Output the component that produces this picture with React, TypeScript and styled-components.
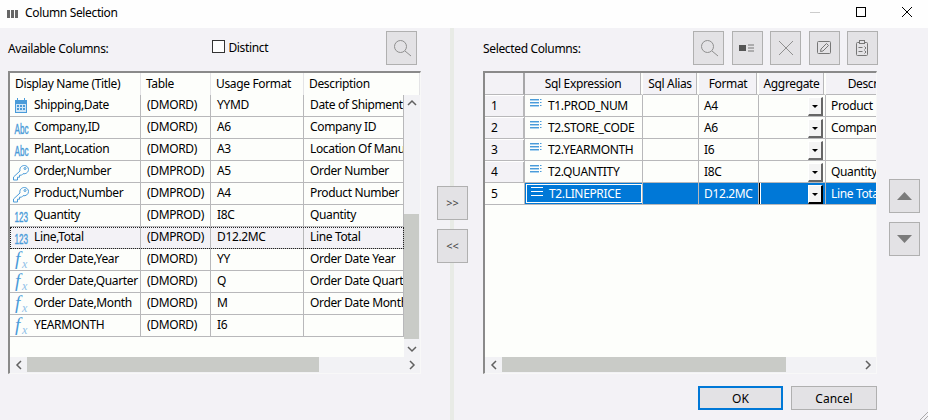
import styled, { createGlobalStyle } from 'styled-components'

type IconKind = 'date' | 'abc' | 'key' | 'num' | 'fx'

interface AvailableColumn {
  name: string
  table: string
  format: string
  description: string
  icon: IconKind
}

interface SelectedColumn {
  sql: string
  format: string
  description: string
}

const AVAILABLE: AvailableColumn[] = [
  { name: 'Shipping,Date', table: '(DMORD)', format: 'YYMD', description: 'Date of Shipment', icon: 'date' },
  { name: 'Company,ID', table: '(DMORD)', format: 'A6', description: 'Company ID', icon: 'abc' },
  { name: 'Plant,Location', table: '(DMORD)', format: 'A3', description: 'Location Of Manufacture', icon: 'abc' },
  { name: 'Order,Number', table: '(DMPROD)', format: 'A5', description: 'Order Number', icon: 'key' },
  { name: 'Product,Number', table: '(DMPROD)', format: 'A4', description: 'Product Number', icon: 'key' },
  { name: 'Quantity', table: '(DMPROD)', format: 'I8C', description: 'Quantity', icon: 'num' },
  { name: 'Line,Total', table: '(DMPROD)', format: 'D12.2MC', description: 'Line Total', icon: 'num' },
  { name: 'Order Date,Year', table: '(DMORD)', format: 'YY', description: 'Order Date Year', icon: 'fx' },
  { name: 'Order Date,Quarter', table: '(DMORD)', format: 'Q', description: 'Order Date Quarter', icon: 'fx' },
  { name: 'Order Date,Month', table: '(DMORD)', format: 'M', description: 'Order Date Month', icon: 'fx' },
  { name: 'YEARMONTH', table: '(DMORD)', format: 'I6', description: '', icon: 'fx' },
]

const SELECTED: SelectedColumn[] = [
  { sql: 'T1.PROD_NUM', format: 'A4', description: 'Product Number' },
  { sql: 'T2.STORE_CODE', format: 'A6', description: 'Company ID' },
  { sql: 'T2.YEARMONTH', format: 'I6', description: '' },
  { sql: 'T2.QUANTITY', format: 'I8C', description: 'Quantity' },
  { sql: 'T2.LINEPRICE', format: 'D12.2MC', description: 'Line Total' },
]

const FOCUSED_AVAILABLE = 6
const ACTIVE_SELECTED = 4
const LEFT_COLS = [131, 70, 93, 100]
const RIGHT_COLS = [40, 118, 56, 60, 67, 106]
const BLUE = '#4a9bd9'

const GlobalStyle = createGlobalStyle`
  html, body {
    margin: 0;
    padding: 0;
    background: #f3f2f6;
  }
  * {
    box-sizing: border-box;
  }
`

const Dialog = styled.div`
  width: 928px;
  height: 420px;
  overflow: hidden;
  position: relative;
  display: flex;
  flex-direction: column;
  background: #f3f2f6;
  color: #000;
  font-family: 'Noto Sans', 'Open Sans', sans-serif;
  font-size: 12px;
  letter-spacing: -0.35px;
`

const TitleBar = styled.div`
  flex: 0 0 28px;
  display: flex;
  align-items: center;
  background: #fefefe;
  padding-left: 7px;
  gap: 7px;
`

const TitleText = styled.span`
  flex: 1;
  line-height: 26px;
  margin-bottom: 2px;
`

const WindowControls = styled.div`
  display: flex;
  align-self: flex-start;
  margin-right: -2px;
`

const WindowControl = styled.div`
  width: 46px;
  height: 24px;
  display: flex;
  align-items: center;
  justify-content: center;
`

const Body = styled.div`
  flex: 1;
  min-height: 0;
  display: flex;
  padding-left: 8px;
`

const Panel = styled.div<{ $width: number }>`
  flex: 0 0 ${(p) => p.$width}px;
  min-width: 0;
  display: flex;
  flex-direction: column;
`

const PanelHeader = styled.div<{ $toolInset: number }>`
  flex: 0 0 43px;
  display: flex;
  align-items: flex-start;
  padding: 3px ${(p) => p.$toolInset}px 0 0;
`

const PanelLabel = styled.span`
  line-height: 35px;
`

const Distinct = styled.label`
  display: flex;
  align-items: center;
  gap: 3px;
  height: 32px;
  margin-left: 104px;
  margin-right: auto;
`

const CheckBox = styled.span`
  width: 13px;
  height: 13px;
  margin-top: -2px;
  background: #fefefe;
  border: 1px solid #333;
`

const ToolButton = styled.button`
  width: 31px;
  height: 34px;
  padding: 0;
  display: flex;
  align-items: center;
  justify-content: center;
  background: #e3e2e5;
  border: 1px solid #b0b0b0;
`

const ToolGroup = styled.div`
  display: flex;
  margin-left: auto;
  margin-right: -1px;
  width: 185px;
  justify-content: space-between;
`

const Frame = styled.div`
  flex: 0 0 303px;
  display: flex;
  flex-direction: column;
  background: #fdfefb;
  border-style: solid;
  border-color: #8a8a8a #f8f8f8 #f8f8f8 #8a8a8a;
  border-width: 2px 1px 1px 2px;
  overflow: hidden;
`

const LeftHeader = styled.div`
  flex: 0 0 22px;
  display: flex;
  background: #fdfefb;
`

const LeftHeaderCell = styled.div<{ $width: number }>`
  flex: 0 0 ${(p) => p.$width}px;
  padding-left: 5px;
  line-height: 21px;
  white-space: nowrap;
  border-right: 1px solid #e4e4e6;
`

const Middle = styled.div`
  flex: 1;
  min-height: 0;
  display: flex;
`

const RowsArea = styled.div`
  flex: 1;
  min-width: 0;
  overflow: hidden;
`

const LeftRow = styled.div<{ $focused: boolean }>`
  height: 22px;
  display: flex;
  position: relative;
  border-bottom: 1px solid #b8b8ba;
  background: ${(p) => (p.$focused ? '#f3f2f6' : 'transparent')};
  outline: ${(p) => (p.$focused ? '1px dotted #222' : 'none')};
  outline-offset: -1px;
`

const Cell = styled.div<{ $width: number; $inset?: number; $active?: boolean }>`
  flex: 0 0 ${(p) => p.$width}px;
  height: 21px;
  padding-left: ${(p) => p.$inset ?? 6}px;
  line-height: 19px;
  white-space: nowrap;
  overflow: hidden;
  border-right: 1px solid #b8b8ba;
  display: flex;
  color: ${(p) => (p.$active ? '#fff' : '#000')};
`

const NameIcon = styled.span`
  flex: 0 0 20px;
  margin-left: -2px;
  margin-right: 2px;
  display: flex;
  align-items: flex-start;
`

const VBar = styled.div`
  flex: 0 0 16px;
  display: flex;
  flex-direction: column;
  align-items: stretch;
  background: #f2f2f5;
`

const HBar = styled.div`
  flex: 0 0 16px;
  display: flex;
  background: #f2f2f5;
`

const BarArrow = styled.div`
  flex: 0 0 17px;
  display: flex;
  align-items: center;
  justify-content: center;
`

const BarTrack = styled.div`
  flex: 1;
  min-width: 0;
  min-height: 0;
`

const VThumb = styled.div<{ $top: number; $size: number }>`
  height: ${(p) => p.$size}px;
  margin: ${(p) => p.$top}px 1px 0 0;
  background: #c9cbc7;
`

const HThumb = styled.div<{ $size: number }>`
  width: ${(p) => p.$size}px;
  height: 15px;
  background: #c9cbc7;
`

const Splitter = styled.div`
  flex: 0 0 31px;
  margin: 0 15px 0 16px;
  display: flex;
  flex-direction: column;
  align-items: center;
`

const SplitterTrack = styled.div<{ $size?: number }>`
  flex: ${(p) => (p.$size ? `0 0 ${p.$size}px` : '1')};
  width: 4px;
  margin-right: 1px;
  background: #e8ebe6;
`

const MoveButton = styled(ToolButton)`
  flex: 0 0 34px;
  font: inherit;
  font-size: 11px;
  color: #444;
`

const SideColumn = styled.div`
  flex: 0 0 31px;
  margin-left: 12px;
  padding-top: 151px;
  display: flex;
  flex-direction: column;
  gap: 9px;
`

const RightHeaderRow = styled.div`
  flex: 0 0 22px;
  display: flex;
  background: #f3f2f6;
`

const RightHeaderCell = styled.div<{ $width: number; $corner: boolean }>`
  flex: 0 0 ${(p) => p.$width}px;
  text-align: center;
  line-height: 21px;
  white-space: nowrap;
  border-right: 2px solid ${(p) => (p.$corner ? '#a6a6a8' : '#fdfefb')};
  border-bottom: 1px solid #b8b8ba;
  box-shadow: ${(p) => (p.$corner ? 'none' : 'inset -1px 0 0 #b8b8ba')};
`

const RightRow = styled.div<{ $active: boolean }>`
  height: 22px;
  display: flex;
  border-bottom: 1px solid #b8b8ba;
  background: ${(p) => (p.$active ? '#0078d7' : 'transparent')};
`

const RowHead = styled.div<{ $active: boolean }>`
  flex: 0 0 ${RIGHT_COLS[0]}px;
  height: 21px;
  padding-left: 6px;
  line-height: 22px;
  background: ${(p) => (p.$active ? '#fdfefb' : '#f3f2f6')};
  border-right: 1px solid #b8b8ba;
  box-shadow: ${(p) => (p.$active ? 'none' : 'inset 0 1px 0 #fff, inset -1px 0 0 #b8b8ba')};
`

const SqlCell = styled(Cell)`
  align-items: flex-start;
  line-height: 21px;
  padding-left: 5px;
  ${(p) => (p.$active ? 'outline: 1px solid #fdfefb; outline-offset: -2px; padding-left: 6px;' : '')}
`

const ListIconSlot = styled.span`
  flex: 0 0 18px;
  padding-top: 4px;
  display: flex;
`

const PlainCell = styled(Cell)`
  line-height: 21px;
  padding-left: 5px;
`

const AggregateCell = styled.div<{ $width: number; $active: boolean }>`
  flex: 0 0 ${(p) => p.$width}px;
  height: 21px;
  display: flex;
  justify-content: flex-end;
  align-items: flex-end;
  padding: 1px 2px 0 0;
  border-right: 1px solid #b8b8ba;
  border-left: ${(p) => (p.$active ? '1px solid #000' : '0')};
  box-shadow: ${(p) => (p.$active ? 'inset 1px 0 0 #fff' : 'none')};
`

const DropButton = styled.div<{ $active: boolean }>`
  width: 15px;
  height: 19px;
  display: flex;
  align-items: center;
  justify-content: center;
  background: #f4f4f4;
  border-style: solid;
  border-color: ${(p) => (p.$active ? '#fff #000 #000 #fff' : '#fff #666 #666 #fff')};
  border-width: 1px 2px 2px 1px;
`

const DropArrow = styled.span`
  width: 0;
  height: 0;
  border-left: 3px solid transparent;
  border-right: 3px solid transparent;
  border-top: 3px solid #000;
`

const Footer = styled.div`
  display: flex;
  justify-content: flex-end;
  gap: 8px;
  padding-top: 12px;
`

const ActionButton = styled.button<{ $primary?: boolean }>`
  width: ${(p) => (p.$primary ? 85 : 86)}px;
  height: 24px;
  padding: 0;
  font: inherit;
  color: #000;
  background: #e3e2e5;
  border: ${(p) => (p.$primary ? '2px solid #0078d7' : '1px solid #b0b0b0')};
`

const ResizeGrip = styled.svg`
  position: absolute;
  right: 0;
  bottom: 0;
`

function GlyphIcon({ kind }: { kind: 'abc' | 'num' }) {
  return (
    <svg width="20" height="21" viewBox="0 0 20 21">
      <text
        transform="translate(2.500 17) scale(0.58 1)"
        fontFamily="Liberation Sans"
        fontSize="14"
        letterSpacing="0"
        fill={BLUE}
        stroke={BLUE}
        strokeWidth="0.4"
      >
        {kind === 'abc' ? 'Abc' : '123'}
      </text>
    </svg>
  )
}

function FieldIcon({ kind }: { kind: IconKind }) {
  if (kind === 'date') {
    return (
      <svg width="20" height="21" viewBox="0 0 20 21">
        <rect x="3" y="5" width="12" height="13" fill={BLUE} />
        <rect x="5" y="3" width="1" height="3" fill={BLUE} />
        <rect x="12" y="3" width="1" height="3" fill={BLUE} />
        <rect x="4" y="9" width="10" height="8" fill="#cfe5f6" />
        {[5, 8, 11].map((x) =>
          [10, 13].map((y) => <rect key={`${x}-${y}`} x={x} y={y} width="2" height="2" fill={BLUE} />),
        )}
      </svg>
    )
  }
  if (kind === 'key') {
    return (
      <svg width="20" height="21" viewBox="0 0 20 21" fill="none" stroke={BLUE} strokeWidth="1">
        <path d="M1.500 19v-3l6.500-6c-.8-3 1.500-5.500 4.300-5.500 2.300 0 4.200 1.800 4.200 4 0 2.800-2.800 4.800-5.500 4.200l-1.500 1.500h-2v2h-2v2.800z" />
        <circle cx="13" cy="7.500" r="1" />
      </svg>
    )
  }
  if (kind === 'fx') {
    return (
      <svg width="20" height="21" viewBox="0 0 20 21">
        <text x="3" y="16" fontFamily="Liberation Serif" fontStyle="italic" fontSize="19" fill={BLUE}>
          f
        </text>
        <text x="10" y="19" fontFamily="Liberation Serif" fontStyle="italic" fontSize="12" fill="#8fc0e8">
          x
        </text>
      </svg>
    )
  }
  return <GlyphIcon kind={kind} />
}

function ListIcon({ active }: { active: boolean }) {
  if (active) {
    return (
      <svg width="13" height="10" viewBox="0 0 13 10" fill="#fff">
        <rect x="0" y="0" width="12" height="1" />
        <rect x="0" y="4" width="12" height="1" />
        <rect x="0" y="8" width="12" height="1" />
      </svg>
    )
  }
  return (
    <svg width="13" height="8" viewBox="0 0 13 8">
      {[0, 3, 6].map((y) => (
        <g key={y}>
          <rect x="0" y={y} width="9" height="1" fill={BLUE} />
          <rect x="0" y={y + 1} width="9" height="1" fill="#a9d2f0" />
          <rect x="10" y={y} width="1.500" height="1" fill={BLUE} />
        </g>
      ))}
    </svg>
  )
}

function SearchIcon() {
  return (
    <svg width="20" height="20" viewBox="0 0 20 20" fill="none" stroke="#8f8f8f">
      <circle cx="8.500" cy="8.500" r="6" />
      <path d="M13 13l6 5" />
    </svg>
  )
}

function CardIcon() {
  return (
    <svg width="16" height="8" viewBox="0 0 16 8">
      <rect x="0" y="1" width="7" height="6" fill="#555" />
      <path d="M9 1h6M9 4h6M9 7h6" stroke="#777" />
    </svg>
  )
}

function CrossIcon() {
  return (
    <svg width="16" height="16" viewBox="0 0 16 16" stroke="#8f8f8f">
      <path d="M1 1l14 14M15 1L1 15" />
    </svg>
  )
}

function PencilIcon() {
  return (
    <svg width="15" height="14" viewBox="0 0 15 14" fill="none" stroke="#777">
      <rect x="0.500" y="0.500" width="13" height="12" rx="1" />
      <path d="M3.500 10.500l.5-2.500 5.500-5.500 2 2-5.500 5.500z" />
    </svg>
  )
}

function ClipboardIcon() {
  return (
    <svg width="13" height="17" viewBox="0 0 13 17" fill="none" stroke="#777">
      <rect x="0.500" y="2.500" width="11" height="13" rx="1" />
      <rect x="3.500" y="0.500" width="5" height="3" fill="#e3e2e5" />
      <path d="M2.500 7.500h4M2.500 11.500h4M8.500 6.500l1.500 1.500-1.500 1.500M8.500 10.500l1.500 1.500-1.500 1.500" />
    </svg>
  )
}

function Triangle({ up }: { up: boolean }) {
  return (
    <svg width="15" height="8" viewBox="0 0 15 8" fill="#7b7b7b">
      <path d={up ? 'M0 8L7.500 0 15 8z' : 'M0 0h15L7.500 8z'} />
    </svg>
  )
}

type ArrowDir = 'up' | 'down' | 'left' | 'right'

const CHEVRONS: Record<ArrowDir, string> = {
  up: 'M1 6l4-4 4 4',
  down: 'M1 3l4 4 4-4',
  left: 'M7 1L3 5l4 4',
  right: 'M3 1l4 4-4 4',
}

function Chevron({ dir }: { dir: ArrowDir }) {
  return (
    <svg width="10" height="10" viewBox="0 0 10 10" fill="none" stroke="#606060" strokeWidth="1.500">
      <path d={CHEVRONS[dir]} />
    </svg>
  )
}

function HorizontalScrollbar({ thumb }: { thumb: number }) {
  return (
    <HBar>
      <BarArrow>
        <Chevron dir="left" />
      </BarArrow>
      <BarTrack>
        <HThumb $size={thumb} />
      </BarTrack>
      <BarArrow>
        <Chevron dir="right" />
      </BarArrow>
    </HBar>
  )
}

function AvailablePanel() {
  return (
    <Panel $width={413}>
      <PanelHeader $toolInset={4}>
        <PanelLabel>Available Columns:</PanelLabel>
        <Distinct>
          <CheckBox />
          Distinct
        </Distinct>
        <ToolButton aria-label="Search available columns">
          <SearchIcon />
        </ToolButton>
      </PanelHeader>
      <Frame>
        <LeftHeader>
          {['Display Name (Title)', 'Table', 'Usage Format', 'Description'].map((title, i) => (
            <LeftHeaderCell key={title} $width={i === 3 ? 116 : LEFT_COLS[i]}>
              {title}
            </LeftHeaderCell>
          ))}
        </LeftHeader>
        <Middle>
          <RowsArea>
            {AVAILABLE.map((col, i) => (
              <LeftRow key={col.name} $focused={i === FOCUSED_AVAILABLE}>
                <Cell $width={LEFT_COLS[0]} $inset={4}>
                  <NameIcon>
                    <FieldIcon kind={col.icon} />
                  </NameIcon>
                  {col.name}
                </Cell>
                <Cell $width={LEFT_COLS[1]}>{col.table}</Cell>
                <Cell $width={LEFT_COLS[2]}>{col.format}</Cell>
                <Cell $width={LEFT_COLS[3]}>{col.description}</Cell>
              </LeftRow>
            ))}
          </RowsArea>
          <VBar>
            <BarArrow>
              <Chevron dir="up" />
            </BarArrow>
            <BarTrack>
              <VThumb $top={102} $size={125} />
            </BarTrack>
            <BarArrow>
              <Chevron dir="down" />
            </BarArrow>
          </VBar>
        </Middle>
        <HorizontalScrollbar thumb={292} />
      </Frame>
    </Panel>
  )
}

function SelectedPanel() {
  return (
    <Panel $width={394}>
      <PanelHeader $toolInset={0}>
        <PanelLabel>Selected Columns:</PanelLabel>
        <ToolGroup>
          <ToolButton aria-label="Search selected columns">
            <SearchIcon />
          </ToolButton>
          <ToolButton aria-label="Details">
            <CardIcon />
          </ToolButton>
          <ToolButton aria-label="Remove">
            <CrossIcon />
          </ToolButton>
          <ToolButton aria-label="Edit">
            <PencilIcon />
          </ToolButton>
          <ToolButton aria-label="Paste">
            <ClipboardIcon />
          </ToolButton>
        </ToolGroup>
      </PanelHeader>
      <Frame>
        <RightHeaderRow>
          {['', 'Sql Expression', 'Sql Alias', 'Format', 'Aggregate', 'Description'].map((title, i) => (
            <RightHeaderCell key={title || 'corner'} $width={RIGHT_COLS[i]} $corner={i === 0}>
              {title}
            </RightHeaderCell>
          ))}
        </RightHeaderRow>
        <Middle>
          <RowsArea>
            {SELECTED.map((col, i) => {
              const active = i === ACTIVE_SELECTED
              return (
                <RightRow key={col.sql} $active={active}>
                  <RowHead $active={active}>{i + 1}</RowHead>
                  <SqlCell $width={RIGHT_COLS[1]} $active={active}>
                    <ListIconSlot>
                      <ListIcon active={active} />
                    </ListIconSlot>
                    {col.sql}
                  </SqlCell>
                  <PlainCell $width={RIGHT_COLS[2]} />
                  <PlainCell $width={RIGHT_COLS[3]} $active={active}>
                    {col.format}
                  </PlainCell>
                  <AggregateCell $width={RIGHT_COLS[4]} $active={active}>
                    <DropButton $active={active}>
                      <DropArrow />
                    </DropButton>
                  </AggregateCell>
                  <PlainCell $width={RIGHT_COLS[5]} $active={active}>
                    {col.description}
                  </PlainCell>
                </RightRow>
              )
            })}
          </RowsArea>
        </Middle>
        <HorizontalScrollbar thumb={284} />
      </Frame>
      <Footer>
        <ActionButton $primary>OK</ActionButton>
        <ActionButton>Cancel</ActionButton>
      </Footer>
    </Panel>
  )
}

export default function App() {
  return (
    <Dialog>
      <GlobalStyle />
      <TitleBar>
        <svg width="11" height="8" viewBox="0 0 11 8" fill="#666">
          <rect x="0" y="0" width="3" height="8" />
          <rect x="4" y="0" width="3" height="8" />
          <rect x="8" y="0" width="3" height="8" />
        </svg>
        <TitleText>Column Selection</TitleText>
        <WindowControls>
          <WindowControl>
            <svg width="10" height="1" viewBox="0 0 10 1">
              <rect width="10" height="1" fill="#ccc" />
            </svg>
          </WindowControl>
          <WindowControl>
            <svg width="10" height="10" viewBox="0 0 10 10" fill="none" stroke="#000">
              <rect x="0.500" y="0.500" width="9" height="9" />
            </svg>
          </WindowControl>
          <WindowControl>
            <svg width="10" height="10" viewBox="0 0 10 10" stroke="#000">
              <path d="M0 0l10 10M10 0L0 10" />
            </svg>
          </WindowControl>
        </WindowControls>
      </TitleBar>
      <Body>
        <AvailablePanel />
        <Splitter>
          <SplitterTrack />
          <MoveButton>&gt;&gt;</MoveButton>
          <SplitterTrack $size={9} />
          <MoveButton>&lt;&lt;</MoveButton>
          <SplitterTrack />
        </Splitter>
        <SelectedPanel />
        <SideColumn>
          <ToolButton aria-label="Move up">
            <Triangle up />
          </ToolButton>
          <ToolButton aria-label="Move down">
            <Triangle up={false} />
          </ToolButton>
        </SideColumn>
      </Body>
      <ResizeGrip width="10" height="10" viewBox="0 0 10 10" stroke="#aaa">
        <path d="M10 2l-8 8M10 6l-4 4" />
      </ResizeGrip>
    </Dialog>
  )
}
